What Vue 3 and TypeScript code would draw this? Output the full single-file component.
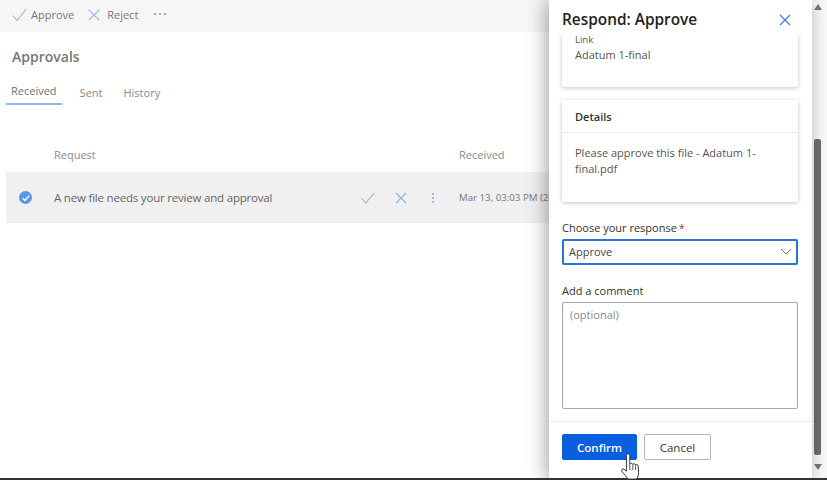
<script setup lang="ts">
const tabs: string[] = ['Received', 'Sent', 'History']
</script>

<template>
  <div class="screen">
    <main class="main">
      <div class="toolbar">
        <span class="tool">
          <svg width="15" height="14" viewBox="0 0 15 14"><path d="M.8 7.5l4.4 5L14.2 1" /></svg>
          Approve
        </span>
        <span class="tool">
          <svg width="12" height="12" viewBox="0 0 12 12"><path d="M.8.8l10.4 10.4M11.2.8L.8 11.2" /></svg>
          Reject
        </span>
        <span class="more"><i></i><i></i><i></i></span>
      </div>
      <h1 class="title">Approvals</h1>
      <nav class="tabs">
        <span v-for="(t, i) in tabs" :key="t" class="tab" :class="{ active: i === 0 }">{{ t }}</span>
      </nav>
      <div class="thead">
        <span class="th-request">Request</span>
        <span class="th-received">Received</span>
      </div>
      <div class="row">
        <span class="check">
          <svg width="12" height="12" viewBox="0 0 12 12"><path d="M2.8 6.2l2.2 2.2 4.2-4.6" /></svg>
        </span>
        <span class="row-title">A new file needs your review and approval</span>
        <span class="actions">
          <svg width="14" height="12" viewBox="0 0 14 12"><path d="M.8 6.5l4 4.5L13.2 1" /></svg>
          <svg width="12" height="12" viewBox="0 0 12 12"><path d="M1 1l10 10M11 1L1 11" /></svg>
          <span class="kebab"><i></i><i></i><i></i></span>
        </span>
        <span class="row-date">Mar 13, 03:03 PM (26 days ago)</span>
      </div>
    </main>

    <aside class="panel">
      <header class="panel-head">
        <h2>Respond: Approve</h2>
        <svg class="close" width="12" height="12" viewBox="0 0 12 12"><path d="M1 1l10 10M11 1L1 11" /></svg>
      </header>
      <div class="panel-body">
        <section class="card card-link">
          <div class="small">Link</div>
          <div class="value">Adatum 1-final</div>
        </section>
        <section class="card card-details">
          <div class="card-head">Details</div>
          <div class="card-text">Please approve this file - Adatum 1-final.pdf</div>
        </section>
        <label class="label label-first">Choose your response <em>*</em></label>
        <div class="select">
          <span>Approve</span>
          <svg width="12" height="7" viewBox="0 0 12 7"><path d="M1 1l5 5 5-5" /></svg>
        </div>
        <label class="label label-second">Add a comment</label>
        <div class="textarea">(optional)</div>
      </div>
      <footer class="panel-foot">
        <button class="btn primary">Confirm</button>
        <button class="btn">Cancel</button>
      </footer>
    </aside>

    <div class="scrollbar">
      <span class="arrow up"></span>
      <span class="thumb"></span>
      <span class="arrow down"></span>
    </div>

    <svg class="cursor" width="26" height="30" viewBox="0 0 26 30">
      <path d="M8 2.2c1.3-1 2.8 0 2.8 1.4V12c.8-.9 2.4-.9 3 .2.8-.7 2.3-.5 2.8.6 1-.6 2.4 0 2.6 1.3l.4 6.4c.1 2.6-.7 4.6-2.2 6.6H9.2C7.6 25 5 22.6 2.8 19.2c-.9-1.5.7-3 2.2-2l2.4 2V3.6c0-.6.2-1 .6-1.4z" />
      <path class="fingers" d="M10.8 12v6M13.8 12.2V18M16.6 12.8V18" />
    </svg>
    <div class="baseline"></div>
  </div>
</template>

<style scoped>
.screen {
  position: relative;
  display: flex;
  width: 827px;
  height: 480px;
  overflow: hidden;
  background: #fff;
  font-family: "Open Sans", "Noto Sans", sans-serif;
  color: #555;
}
.main {
  width: 549px;
  flex: none;
  overflow: hidden;
  white-space: nowrap;
}
.toolbar {
  display: flex;
  align-items: center;
  height: 32px;
  box-sizing: border-box;
  padding: 0 0 3px 12px;
  background: #f6f6f6;
  font-size: 11px;
  color: #777;
}
.toolbar svg path,
.actions svg path {
  fill: none;
  stroke: #8db4ee;
  stroke-width: 1.1;
}
.tool {
  display: flex;
  align-items: center;
  gap: 4px;
  margin-right: 14px;
}
.tool:nth-child(2) { gap: 7px; margin-right: 16px; }
.more { display: flex; gap: 3px; margin-bottom: 1px; }
.more i { width: 2px; height: 2px; background: #999; border-radius: 50%; }
.title {
  margin: 13px 0 0 12px;
  font-size: 14px;
  line-height: 24px;
  font-weight: 600;
  color: #777;
}
.tabs {
  display: flex;
  margin: 13px 0 0 6px;
  font-size: 11px;
  color: #8c8c8c;
}
.tab { height: 24px; line-height: 22px; padding: 0 5px; margin-right: 11px; }
.tab.active {
  color: #6f6f6f;
  margin-right: 13px;
  height: 22px;
  border-bottom: 2px solid #8db4ee;
  margin-top: -1px;
  line-height: 20px;
}
.thead {
  display: flex;
  margin-top: 36px;
  height: 25px;
  padding-bottom: 5px;
  font-size: 11px;
  line-height: 25px;
  color: #8a8a8a;
}
.th-request { margin-left: 54px; width: 405px; }
.row {
  display: flex;
  align-items: center;
  height: 51px;
  margin-left: 6px;
  background: #f0f0f0;
}
.check {
  display: flex;
  align-items: center;
  justify-content: center;
  flex: none;
  width: 13px;
  height: 13px;
  margin-left: 13px;
  border-radius: 50%;
  background: #5a96ec;
}
.check path { fill: none; stroke: #fff; stroke-width: 1.4; }
.row-title {
  flex: none;
  width: 307px;
  margin-left: 22px;
  font-size: 11.5px;
  font-weight: 500;
  color: #666;
  letter-spacing: -.2px;
}
.actions { display: flex; align-items: center; flex: none; width: 98px; gap: 20px; }
.kebab { display: flex; flex-direction: column; gap: 2px; margin-left: 5px; }
.kebab i { width: 2px; height: 2px; border-radius: 50%; background: #7ba8ea; }
.row-date { flex: none; font-size: 9.7px; color: #777; }
.panel {
  position: relative;
  z-index: 1;
  display: flex;
  flex-direction: column;
  width: 263px;
  flex: none;
  background: #fff;
  box-shadow: -3px 0 18px rgba(0, 0, 0, .35);
  color: #333;
}
.panel-head {
  display: flex;
  align-items: center;
  justify-content: space-between;
  flex: none;
  height: 34px;
  padding: 5px 21px 0 13px;
  box-sizing: border-box;
  background: #fff;
  position: relative;
  z-index: 1;
}
.panel-head h2 {
  margin: 0;
  font-size: 15.4px;
  font-weight: 600;
  line-height: 22px;
  color: #222;
}
.close path { fill: none; stroke: #3a7de0; stroke-width: 1.2; }
.panel-body {
  flex: 1;
  min-height: 0;
  overflow: hidden;
  padding: 0 14px 0 13px;
}
.card {
  border-radius: 2px;
  background: #fff;
  box-shadow: 0 1px 4px rgba(0, 0, 0, .24);
}
.card-link {
  height: 53px;
  box-sizing: border-box;
  padding: 0 13px;
}
.small { font-size: 9.5px; line-height: 11px; color: #555; }
.value { margin-top: 1px; font-size: 11px; line-height: 17px; color: #555; }
.card-details { height: 102px; margin-top: 13px; }
.card-head {
  height: 33px;
  padding: 1px 13px 0;
  border-bottom: 1px solid #eee;
  box-sizing: border-box;
  font-size: 11px;
  font-weight: 600;
  line-height: 32px;
  color: #333;
}
.card-text {
  padding: 12px 13px 0;
  font-size: 11px;
  line-height: 16px;
  color: #555;
}
.label {
  display: block;
  font-size: 11px;
  line-height: 16px;
  color: #333;
}
.label em { margin-left: -1px; color: #b33; font-style: normal; }
.label-first { margin-top: 18px; }
.select {
  display: flex;
  align-items: center;
  justify-content: space-between;
  height: 26px;
  margin-top: 3px;
  padding: 0 4px 2px 5px;
  box-sizing: border-box;
  border: 2px solid #2b72d8;
  border-radius: 2px;
  font-size: 11px;
  color: #444;
}
.select path { fill: none; stroke: #777; stroke-width: 1; }
.label-second { margin-top: 18px; }
.textarea {
  height: 107px;
  margin-top: 3px;
  padding: 4px 7px;
  box-sizing: border-box;
  border: 1px solid #a6a6a6;
  border-radius: 2px;
  font-size: 11px;
  line-height: 16px;
  color: #888;
}
.panel-foot {
  display: flex;
  gap: 7px;
  flex: none;
  height: 59px;
  padding: 12px 0 0 13px;
  box-sizing: border-box;
  border-top: 1px solid #eee;
}
.btn {
  width: 67px;
  height: 26px;
  padding: 0;
  border: 1px solid #b5b5b5;
  border-radius: 2px;
  background: #fff;
  font: 500 11.5px "Open Sans", sans-serif;
  color: #333;
}
.btn.primary {
  width: 75px;
  border-color: #0a5fe0;
  background: #0a5fe0;
  color: #fff;
  font-weight: 600;
}
.scrollbar {
  position: relative;
  display: flex;
  flex-direction: column;
  align-items: center;
  flex: 1;
  padding-right: 4px;
  background: #f9f9f9;
}
.thumb {
  width: 7px;
  height: 316px;
  flex: none;
  margin-top: 129px;
  border-radius: 2px;
  background: #6e6e6e;
}
.arrow {
  flex: none;
  width: 0;
  height: 0;
  border-left: 4px solid transparent;
  border-right: 4px solid transparent;
}
.arrow.up { margin-top: 4px; border-bottom: 6px solid #777; }
.arrow.down { margin-top: 9px; border-top: 6px solid #777; }
.cursor {
  position: absolute;
  left: 619px;
  top: 452px;
  z-index: 3;
}
.cursor path { fill: #fff; stroke: #333; stroke-width: 1; }
.cursor .fingers { fill: none; stroke-width: .8; }
.baseline {
  position: absolute;
  left: 0;
  right: 0;
  bottom: 0;
  height: 2px;
  background: #333;
  z-index: 2;
}
</style>
